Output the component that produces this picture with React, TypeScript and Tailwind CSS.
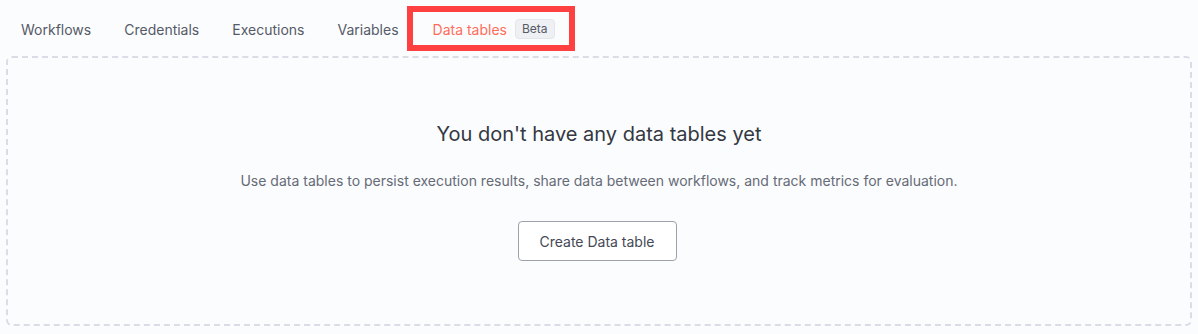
import React from "react";

const tabs = ["Workflows", "Credentials", "Executions", "Variables"];

export default function App() {
  return (
    <div
      className="relative w-[1198px] h-[334px] bg-[#fbfcfe] overflow-hidden"
      style={{ fontFamily: "Inter, 'Noto Sans', sans-serif" }}
    >
      {/* tabs */}
      <div className="flex items-center h-[56px] pl-[21px] pt-[2px] gap-[33px] text-[14px] text-[#555a66]">
        {tabs.map((t) => (
          <span key={t}>{t}</span>
        ))}
        <span className="flex items-center gap-2 ml-[1px]">
          <span className="text-[#ff6d5a]">Data tables</span>
          <span className="px-[6px] h-[20px] flex items-center rounded bg-[#eef0f4] border border-[#e3e6ec] text-[12px] text-[#555a66]">
            Beta
          </span>
        </span>
      </div>

      {/* empty state */}
      <div className="mx-[6px] h-[270px] border-2 border-dashed border-[#dadde6] rounded-[6px] flex flex-col items-center">
        <h2 className="mt-[62px] text-[20px] text-[#333842] leading-[28px]">
          You don't have any data tables yet
        </h2>
        <p className="mt-[23px] text-[14px] text-[#666b76] leading-[20px]">
          Use data tables to persist execution results, share data between workflows, and track metrics for evaluation.
        </p>
        <button className="mt-[30px] h-[40px] w-[159px] -translate-x-[2px] rounded-[4px] border border-[#9ca1ac] bg-white text-[14px] text-[#444955]">
          Create Data table
        </button>
      </div>

      {/* annotation box */}
      <div className="absolute left-[407px] top-[6px] w-[168px] h-[45px] border-[6px] border-[#ff4040]" />
    </div>
  );
}
